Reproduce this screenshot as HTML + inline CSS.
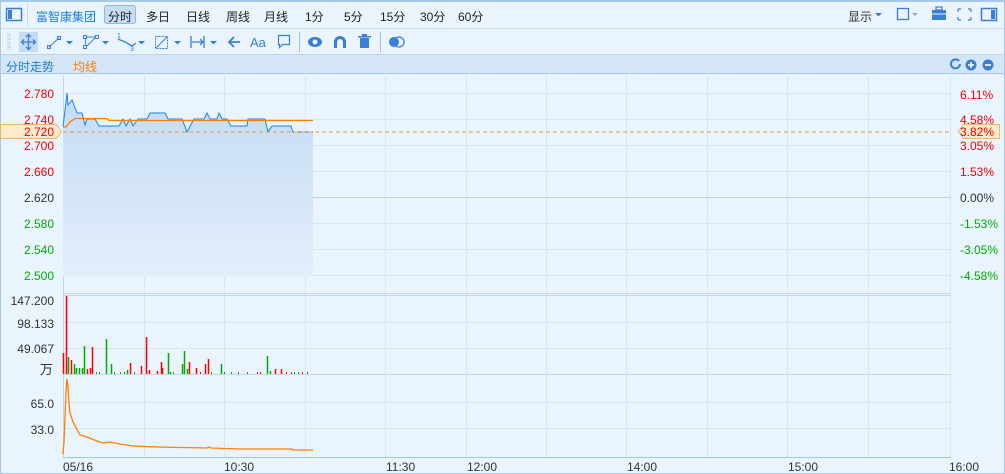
<!DOCTYPE html>
<html><head><meta charset="utf-8"><style>
*{margin:0;padding:0;box-sizing:border-box}
body{width:1005px;height:474px;overflow:hidden;background:#eaf4fd;font-family:"Liberation Sans","Noto Sans CJK SC",sans-serif;position:relative}
.t{position:absolute;font-size:12px;white-space:nowrap}
.l{position:absolute;left:0;width:54px;text-align:right;font-size:12px;white-space:nowrap}
.r{position:absolute;left:960px;font-size:12px;white-space:nowrap}
</style></head><body>
<div style="position:absolute;left:0;top:0;width:1005px;height:474px;border:1px solid #a6c8ea;border-top:2px solid #a6c8ea"></div>
<div style="position:absolute;left:1px;top:28px;width:1003px;height:1px;background:#c9dcef"></div>
<div style="position:absolute;left:1px;top:54px;width:1003px;height:20px;background:#d4e5f6;border-top:1px solid #bcd4ec;border-bottom:1px solid #a6c8ea"></div>
<div style="position:absolute;left:27px;top:3px;width:1px;height:24px;background:#c9dcef"></div>
<svg style="position:absolute;left:0;top:0" width="1005" height="474" font-family="Liberation Sans, Noto Sans CJK SC, sans-serif" font-size="12">
<rect x="6.5" y="8.5" width="15" height="12" fill="none" stroke="#3a7fd5" stroke-width="1.5"/><rect x="8" y="10" width="4" height="9" fill="#3a7fd5"/>
<rect x="104.5" y="5.5" width="31" height="18" rx="2" fill="#c7dcf3" stroke="#92b8e0"/>
<rect x="897.5" y="8.5" width="11" height="11" fill="none" stroke="#3a7fd5" stroke-width="1.3"/>
<path d="M912 13l3 3 3-3z" fill="#8fa8c4"/><path d="M875 13l3.5 3.5 3.5-3.5z" fill="#3a7fd5"/>
<rect x="932" y="10" width="14" height="10" fill="#3a7fd5"/><rect x="936" y="7" width="6" height="3" fill="none" stroke="#3a7fd5" stroke-width="1.2"/><line x1="932" y1="14" x2="946" y2="14" stroke="#eaf4fd"/>
<path d="M958 9h3M958 9v3M971 9h-3M971 9v3M958 20h3M958 20v-3M971 20h-3M971 20v-3" stroke="#3a7fd5" stroke-width="1.2"/>
<rect x="981.5" y="8.5" width="15" height="12" fill="none" stroke="#3a7fd5" stroke-width="1.5"/><rect x="991" y="10" width="4" height="9" fill="#3a7fd5"/>
<path d="M8 33v18M10 33v18" stroke="#9cc0e6" stroke-dasharray="1 1"/>
<rect x="19" y="32" width="19" height="20" fill="#c7dcf3"/>
<path d="M28.5 35v14M21.5 42h14M26 37l2.5-2.5 2.5 2.5M26 47l2.5 2.5 2.5-2.5M24 39.5l-2.5 2.5 2.5 2.5M33 39.5l2.5 2.5-2.5 2.5" stroke="#3a7fd5" stroke-width="1.3" fill="none"/>
<path d="M49 47l10-9" stroke="#3a7fd5"/><rect x="47.5" y="45.5" width="3" height="3" fill="none" stroke="#3a7fd5"/><rect x="57.5" y="36.5" width="3" height="3" fill="none" stroke="#3a7fd5"/><path d="M66 41l3.5 3.5 3.5-3.5z" fill="#3a7fd5"/>
<path d="M85 37h11l-10 10z" fill="none" stroke="#3a7fd5"/><rect x="83.5" y="35.5" width="3" height="3" fill="#eaf4fd" stroke="#3a7fd5"/><rect x="95.5" y="35.5" width="3" height="3" fill="#eaf4fd" stroke="#3a7fd5"/><rect x="83.5" y="45.5" width="3" height="3" fill="#eaf4fd" stroke="#3a7fd5"/><path d="M102 41l3.5 3.5 3.5-3.5z" fill="#3a7fd5"/>
<path d="M118 39l7 3 7 4 4-3" stroke="#3a7fd5" fill="none" stroke-width="1.3"/><text x="117" y="38" font-size="7" fill="#3a7fd5">1</text><text x="130" y="51" font-size="7" fill="#3a7fd5">3</text><path d="M138 41l3.5 3.5 3.5-3.5z" fill="#3a7fd5"/>
<rect x="155.5" y="36.5" width="12" height="12" fill="none" stroke="#3a7fd5" stroke-dasharray="2 1"/><path d="M156 48l11-11" stroke="#3a7fd5"/><path d="M174 41l3.5 3.5 3.5-3.5z" fill="#3a7fd5"/>
<path d="M191 36v12M204 36v12M192 42h11M200 39l3 3-3 3" stroke="#3a7fd5" fill="none" stroke-width="1.3"/><path d="M210 41l3.5 3.5 3.5-3.5z" fill="#3a7fd5"/>
<path d="M229 42h11M234 37l-5 5 5 5" stroke="#3a7fd5" fill="none" stroke-width="1.8"/>
<text x="250" y="47" font-size="13" fill="#3a7fd5">Aa</text>
<path d="M278.5 35.5h11v9h-7l-3 3v-3h-1z" fill="none" stroke="#3a7fd5" stroke-width="1.2"/>
<line x1="299.5" y1="32" x2="299.5" y2="52" stroke="#9cc0e6"/>
<ellipse cx="315" cy="42" rx="7" ry="5" fill="#3a7fd5"/><circle cx="315" cy="42" r="2.5" fill="#eaf4fd"/>
<path d="M334 48v-6a6 6 0 0 1 12 0v6h-3v-6a3 3 0 0 0-6 0v6z" fill="#3a7fd5"/>
<rect x="360" y="38" width="9" height="10" fill="#3a7fd5"/><rect x="358" y="36" width="13" height="1.5" fill="#3a7fd5"/><rect x="362" y="34" width="5" height="2" fill="#3a7fd5"/>
<line x1="380.5" y1="32" x2="380.5" y2="52" stroke="#9cc0e6"/>
<circle cx="394" cy="42" r="5" fill="#3a7fd5"/><circle cx="399" cy="42" r="5" fill="none" stroke="#3a7fd5" stroke-width="1.3"/>
<path d="M959 61a4.5 4.5 0 1 0 1 3" fill="none" stroke="#3a7fd5" stroke-width="2"/>
<circle cx="971" cy="65" r="5.5" fill="#3a7fd5"/><path d="M968 65h6M971 62v6" stroke="#fff" stroke-width="1.6"/>
<circle cx="988" cy="65" r="5.5" fill="#3a7fd5"/><path d="M985 65h6" stroke="#fff" stroke-width="1.6"/>
<g stroke="#d6e6f5">
<path d="M144.5 75v383M224.5 75v383M305.5 75v383M385.5 75v383M466.5 75v383M546.5 75v383M626.5 75v383M707.5 75v383M787.5 75v383M868.5 75v383M950.5 75v383"/>
<path d="M63 93.5h888M63 119.5h888M63 145.5h888M63 171.5h888M63 223.5h888M63 249.5h888M63 275.5h888M63 322.5h888M63 348.5h888M63 402.5h888M63 428.5h888"/>
</g>
<path d="M63 197.5h888" stroke="#bfd1ea"/>
<path d="M63 293.5h888M63 295.5h888M63 374.5h888" stroke="#c3d6ec"/>
<path d="M63 457.5h888" stroke="#a6c3e0"/>
<path d="M63.5 75v383" stroke="#c3d6ec"/>
<defs><linearGradient id="g" x1="0" y1="0" x2="0" y2="1"><stop offset="0" stop-color="#c4dbf6"/><stop offset="1" stop-color="#e3eefb"/></linearGradient></defs>
<path d="M63 127L65 110L67 93L68 105L72 100L77 113L82 113L85 125L87 119L95 119L99 126L119 126L123 119L126 126L130 119L133 126L138 119L147 119L150 113L165 113L168 119L182 119L187 132L194 119L204 119L207 113L210 119L217 119L219 113L222 119L227 119L231 126L247 126L248 119L265 119L268 132L272 126L291 126L293 132L313 132L313 276L63 276Z" fill="url(#g)"/>
<path d="M63 127L65 110L67 93L68 105L72 100L77 113L82 113L85 125L87 119L95 119L99 126L119 126L123 119L126 126L130 119L133 126L138 119L147 119L150 113L165 113L168 119L182 119L187 132L194 119L204 119L207 113L210 119L217 119L219 113L222 119L227 119L231 126L247 126L248 119L265 119L268 132L272 126L291 126L293 132L313 132" fill="none" stroke="#1a86e8" stroke-width="1"/>
<path d="M63 127L66 127L70 122L75 118.5L107 118.5L109 120.5L313 120.5" fill="none" stroke="#ff7f00" stroke-width="1.3"/>
<path d="M63 132h888" stroke="#f39a2a" stroke-dasharray="4 3"/>
<path d="M0.5 124.5h56l5 7-5 7h-56z" fill="#fdebcc" stroke="#f0b56a"/>
<path d="M958.5 131.5l5-7h36v14h-36z" fill="#fdebcc" stroke="#f0b56a"/>
<g stroke-width="1.5">
<g stroke="#f00"><path d="M63.5 374V353M66.5 374V296M71.5 374V360M87.5 374V369M90.5 374V368M92.5 374V347M130.5 374V363M141.5 374V366M146.5 374V337M149.5 374V370M157.5 374V371M161.5 374V362M162.5 374V368M189.5 374V362M196.5 374V368M205.5 374V364M208.5 374V359M275.5 374V369M281.5 374V369"/></g>
<g stroke="#0a0"><path d="M68.5 374V357M74.5 374V364M76.5 374V368M79.5 374V368M82.5 374V368M84.5 374V346M106.5 374V339M111.5 374V364M127.5 374V370M168.5 374V353M170.5 374V372M182.5 374V364M184.5 374V351M187.5 374V369M221.5 374V364M267.5 374V356M270.5 374V371"/></g>
<g stroke="#0a0" stroke-width="1"><path d="M96.5 374v-2M99.5 374v-2M114.5 374v-2M120.5 374v-2M124.5 374v-2M134.5 374v-2M173.5 374v-2M211.5 374v-2M224.5 374v-2M231.5 374v-2M238.5 374v-2M247.5 374v-2M294.5 374v-2M298.5 374v-2M307.5 374v-2"/></g>
<g stroke="#f00" stroke-width="1"><path d="M200.5 374v-2M257.5 374v-2M260.5 374v-2M286.5 374v-2M291.5 374v-2M302.5 374v-2"/></g>
</g>
<path d="M63 454L64 442L65 417L66 392L67 379L68 387L69 403L70 413L73 422L80 435L87 437L97 441L103 443L110 442L120 444L133 446L157 447L207 448L209 447L211 448L240 449L292 449L293 450L313 450" fill="none" stroke="#ff7f00" stroke-width="1.3"/>
</svg>
<div class="t" style="left:36px;top:8px;color:#1a7fd8">富智康集团</div>
<div class="t" style="left:108px;top:8px;color:#222">分时</div>
<div class="t" style="left:146px;top:8px;color:#222">多日</div>
<div class="t" style="left:186px;top:8px;color:#222">日线</div>
<div class="t" style="left:226px;top:8px;color:#222">周线</div>
<div class="t" style="left:264px;top:8px;color:#222">月线</div>
<div class="t" style="left:305px;top:8px;color:#222">1分</div>
<div class="t" style="left:344px;top:8px;color:#222">5分</div>
<div class="t" style="left:380px;top:8px;color:#222">15分</div>
<div class="t" style="left:420px;top:8px;color:#222">30分</div>
<div class="t" style="left:458px;top:8px;color:#222">60分</div>
<div class="t" style="left:848px;top:8px;color:#333">显示</div>
<div class="t" style="left:6px;top:58px;color:#1a7fd8">分时走势</div>
<div class="t" style="left:73px;top:58px;color:#ff7f00">均线</div>
<div class="l" style="top:87px;color:#e00">2.780</div>
<div class="l" style="top:113px;color:#e00">2.740</div>
<div class="l" style="top:125px;color:#e00">2.720</div>
<div class="l" style="top:139px;color:#e00">2.700</div>
<div class="l" style="top:165px;color:#e00">2.660</div>
<div class="l" style="top:191px;color:#333">2.620</div>
<div class="l" style="top:217px;color:#0a0">2.580</div>
<div class="l" style="top:243px;color:#0a0">2.540</div>
<div class="l" style="top:269px;color:#0a0">2.500</div>
<div class="l" style="top:294px;color:#333">147.200</div>
<div class="l" style="top:317px;color:#333">98.133</div>
<div class="l" style="top:342px;color:#333">49.067</div>
<div class="t" style="left:40px;top:359px;color:#333;font-size:13px">万</div>
<div class="l" style="top:397px;color:#333">65.0</div>
<div class="l" style="top:423px;color:#333">33.0</div>
<div class="r" style="top:88px;color:#e00">6.11%</div>
<div class="r" style="top:113px;color:#e00">4.58%</div>
<div class="r" style="top:125px;color:#e00">3.82%</div>
<div class="r" style="top:139px;color:#e00">3.05%</div>
<div class="r" style="top:165px;color:#e00">1.53%</div>
<div class="r" style="top:191px;color:#333">0.00%</div>
<div class="r" style="top:217px;color:#0a0">-1.53%</div>
<div class="r" style="top:243px;color:#0a0">-3.05%</div>
<div class="r" style="top:269px;color:#0a0">-4.58%</div>
<div class="t" style="left:63px;top:460px;color:#333">05/16</div>
<div class="t" style="left:224px;top:460px;color:#333">10:30</div>
<div class="t" style="left:386px;top:460px;color:#333">11:30</div>
<div class="t" style="left:467px;top:460px;color:#333">12:00</div>
<div class="t" style="left:627px;top:460px;color:#333">14:00</div>
<div class="t" style="left:788px;top:460px;color:#333">15:00</div>
<div class="t" style="left:949px;top:460px;color:#333">16:00</div>
</body></html>
